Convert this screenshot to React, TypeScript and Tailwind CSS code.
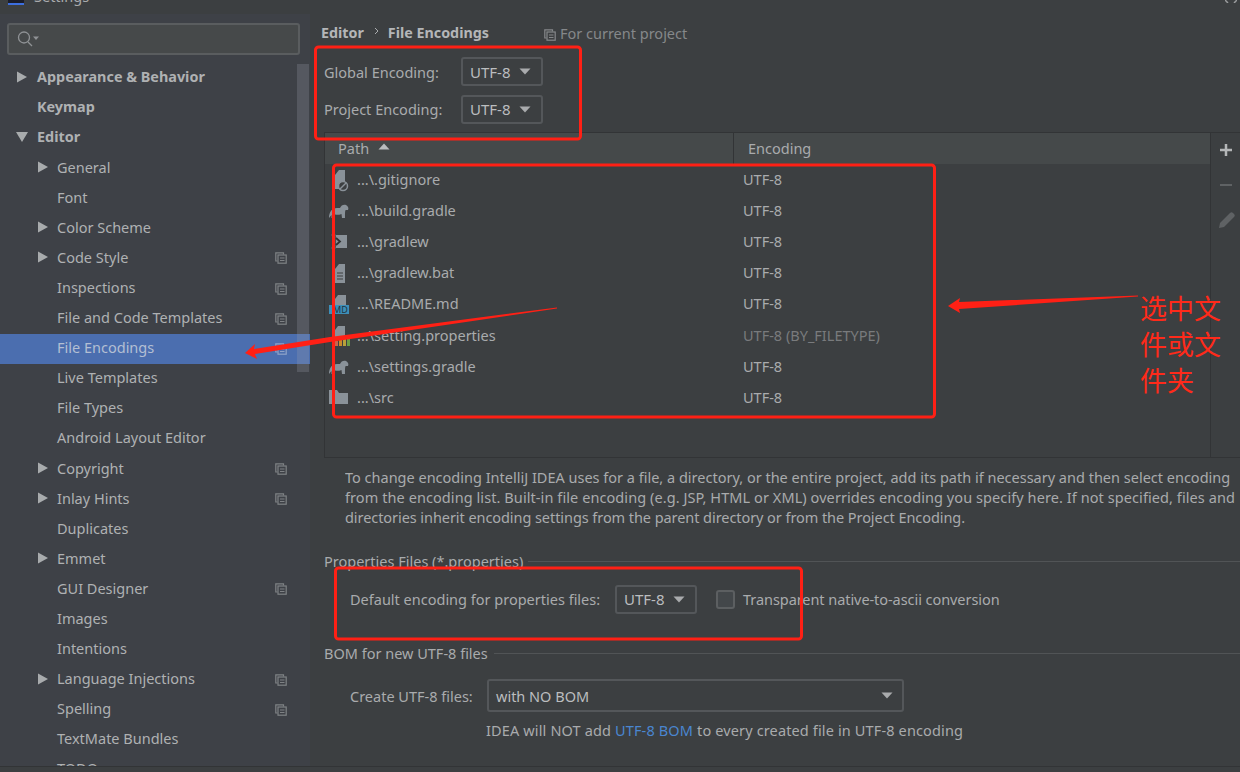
const font = "font-['Noto_Sans','Open_Sans',sans-serif]";

type TreeRow = { label: string; level: 0 | 1; bold?: boolean; arrow?: "right" | "down"; copy?: boolean; selected?: boolean };

const treeRows: TreeRow[] = [
  { label: "Appearance & Behavior", level: 0, bold: true, arrow: "right" },
  { label: "Keymap", level: 0, bold: true },
  { label: "Editor", level: 0, bold: true, arrow: "down" },
  { label: "General", level: 1, arrow: "right" },
  { label: "Font", level: 1 },
  { label: "Color Scheme", level: 1, arrow: "right" },
  { label: "Code Style", level: 1, arrow: "right", copy: true },
  { label: "Inspections", level: 1, copy: true },
  { label: "File and Code Templates", level: 1, copy: true },
  { label: "File Encodings", level: 1, copy: true, selected: true },
  { label: "Live Templates", level: 1 },
  { label: "File Types", level: 1 },
  { label: "Android Layout Editor", level: 1 },
  { label: "Copyright", level: 1, arrow: "right", copy: true },
  { label: "Inlay Hints", level: 1, arrow: "right", copy: true },
  { label: "Duplicates", level: 1 },
  { label: "Emmet", level: 1, arrow: "right" },
  { label: "GUI Designer", level: 1, copy: true },
  { label: "Images", level: 1 },
  { label: "Intentions", level: 1 },
  { label: "Language Injections", level: 1, arrow: "right", copy: true },
  { label: "Spelling", level: 1, copy: true },
  { label: "TextMate Bundles", level: 1 },
  { label: "TODO", level: 1 },
];

const fileRows = [
  { path: "...\\.gitignore", encoding: "UTF-8", icon: "ignore" },
  { path: "...\\build.gradle", encoding: "UTF-8", icon: "gradle" },
  { path: "...\\gradlew", encoding: "UTF-8", icon: "shell" },
  { path: "...\\gradlew.bat", encoding: "UTF-8", icon: "text" },
  { path: "...\\README.md", encoding: "UTF-8", icon: "md" },
  { path: "...\\setting.properties", encoding: "UTF-8 (BY_FILETYPE)", icon: "props", dim: true },
  { path: "...\\settings.gradle", encoding: "UTF-8", icon: "gradle" },
  { path: "...\\src", encoding: "UTF-8", icon: "folder" },
];

const Arrow = ({ dir }: { dir: "right" | "down" }) => (
  <svg width="12" height="12" viewBox="0 0 12 12" className="shrink-0">
    <path d={dir === "right" ? "M1 0.5 L11 6 L1 11.5 Z" : "M0 1 L12 1 L6 11 Z"} fill="#a8abad" />
  </svg>
);

const CopyIcon = ({ color = "#7f8285" }: { color?: string }) => (
  <svg width="12" height="12" viewBox="0 0 12 12" fill="none" stroke={color} strokeWidth="1.2">
    <path d="M2.5 9 H0.8 V0.8 H8.5 V2.5" />
    <rect x="3" y="3" width="8.2" height="8.2" />
    <path d="M5 6 H9.5 M5 8.5 H9.5" />
  </svg>
);

const Caret = () => (
  <svg width="12" height="7" viewBox="0 0 12 7">
    <path d="M0.5 0.5 H11.5 L6 6.5 Z" fill="#a9abad" />
  </svg>
);

const Select = ({ value, width }: { value: string; width: string }) => (
  <div className={`${width} h-[29px] flex items-center justify-between pl-[7px] pr-[10px] rounded-[3px] border-2 border-[#54575a] text-[#bbbdbf] text-[15px]`}>
    <span>{value}</span>
    <Caret />
  </div>
);

const FileIcon = ({ kind }: { kind: string }) => {
  const g = "#8a9299";
  const paper = "M7 5 L11 0 H17 V19 H7 Z";
  return (
    <svg width="24" height="22" viewBox="0 0 24 22">
      {kind === "gradle" && (
        <path d="M1 17 C1 11 4 7 9 7 L12 7 C13 4 16 3 18 4 C20 5 21 7 20 9 L18 9 C17 9 17 11 17 17 H14 L13.5 13 C11 14 9 14 7 13.500 L6.500 17 H3.500 L3.500 14 Z" fill={g} />
      )}
      {kind === "folder" && <path d="M1 2 H9 L11 5 H20 V16 H1 Z" fill={g} />}
      {kind === "shell" && (
        <g>
          <rect x="8" y="3" width="11" height="13" fill={g} />
          <path d="M3 3 H8 V16 H3" fill="none" stroke={g} strokeWidth="0.8" opacity="0.5" />
          <path d="M8 6 L12 9.500 L8 13" fill="none" stroke="#2f3234" strokeWidth="1.8" />
        </g>
      )}
      {kind === "md" && (
        <g>
          <path d="M7 4 L10 0 H18 V11 H7 Z" fill={g} />
          <rect x="1" y="10" width="20" height="9" fill="#3d8fb8" />
          <text x="5" y="18" fontSize="9" fill="#22323c" fontFamily="Noto Sans">MD</text>
        </g>
      )}
      {kind === "props" && (
        <g>
          <path d="M7 4 L10 0 H17 V12 H7 Z" fill={g} />
          <rect x="7" y="15" width="3" height="5" fill="#c9654a" />
          <rect x="11" y="14" width="3" height="6" fill="#c98a2a" />
          <rect x="15" y="12" width="3" height="8" fill="#b8a03a" />
          <rect x="19" y="9" width="3" height="11" fill="#6a9e44" />
        </g>
      )}
      {(kind === "text" || kind === "ignore") && <path d={paper} fill={g} />}
      {kind === "text" && <path d="M9 9 H15 M9 12 H15 M9 15 H15" stroke="#3c3f41" strokeWidth="1.200" />}
      {kind === "ignore" && (
        <g>
          <circle cx="15" cy="16" r="4.500" fill="#3c3f41" stroke={g} strokeWidth="1.500" />
          <path d="M12 19 L18 13" stroke={g} strokeWidth="1.500" />
        </g>
      )}
    </svg>
  );
};

const Sidebar = () => (
  <aside className="relative w-[310px] shrink-0 bg-[#3e4147] flex flex-col overflow-hidden">
    <div className="h-[49px] shrink-0 px-[7px] pt-[9px]">
      <div className="h-[32px] w-[293px] rounded-[3px] border-2 border-[#5a5d5f] bg-[#46494a] flex items-center pl-[7px]">
        <svg width="24" height="18" viewBox="0 0 24 18" fill="none" stroke="#8f9295" strokeWidth="1.300">
          <circle cx="8" cy="7.500" r="5.500" />
          <path d="M12 12 L16 16" />
          <path d="M17 6.500 H23 L20 10 Z" fill="#8f9295" stroke="none" />
        </svg>
      </div>
    </div>
    {treeRows.map((row) => (
      <div
        key={row.label}
        className={`h-[30.08px] shrink-0 flex items-center relative pb-[3px] ${row.selected ? "bg-[#4b6eaf] text-[#b3bfd3]" : "text-[#afb1b3]"} ${row.bold ? "font-bold text-[14.4px]" : ""} ${row.level === 0 ? "pl-[37px]" : "pl-[57px]"}`}
      >
        {row.arrow && (
          <span className={`absolute top-[8px] ${row.level === 0 ? "left-[16px]" : "left-[37px]"}`}>
            <Arrow dir={row.arrow} />
          </span>
        )}
        <span>{row.label}</span>
        {row.copy && (
          <span className="absolute left-[275px] top-[9px]">
            <CopyIcon color={row.selected ? "#8ea3c9" : "#7f8285"} />
          </span>
        )}
      </div>
    ))}
    <div className="absolute left-[297px] top-[50px] w-[12px] h-[308px] bg-[#9aa0aa]/25" />
  </aside>
);

const Main = () => (
  <main className="flex-1 min-w-0 flex flex-col bg-[#3c3f41] text-[#a9abad]">
    <div className="h-[29px] shrink-0 flex items-end pl-[11px]">
      <span className="font-bold text-[14.3px] text-[#b4b6b8]">Editor</span>
      <svg width="6" height="8" viewBox="0 0 6 8" fill="none" stroke="#a9abad" className="ml-[10px] mr-[8px] mb-[8px]">
        <path d="M1 1 L4 4 L1 7" />
      </svg>
      <span className="font-bold text-[14.3px] text-[#b4b6b8]">File Encodings</span>
      <span className="ml-[55px] mr-[4px] mb-[2px]"><CopyIcon color="#85888a" /></span>
      <span className="text-[#85888a]">For current project</span>
    </div>
    <div className="h-[37.5px] shrink-0 pl-[14px] flex items-center mt-[10px]">
      <span className="w-[137px]">Global Encoding:</span>
      <Select value="UTF-8" width="w-[82px]" />
    </div>
    <div className="h-[37.5px] shrink-0 pl-[14px] flex items-center">
      <span className="w-[137px]">Project Encoding:</span>
      <Select value="UTF-8" width="w-[82px]" />
    </div>
    <div className="h-[326px] shrink-0 mt-[4px] ml-[14px] border-l border-t border-b border-[#323436] flex">
      <div className="w-[885px] shrink-0 flex flex-col">
        <div className="h-[31px] shrink-0 bg-[#45494a] flex items-center pb-[2px]">
          <div className="w-[409px] pl-[13px] flex items-center gap-[9px] border-r border-[#323436] h-[31px] -mb-[2px] pb-[2px]">
            <span>Path</span>
            <svg width="12" height="7" viewBox="0 0 12 7" className="mb-[3px]"><path d="M0.5 6.500 H11.500 L6 0.5 Z" fill="#bbbdbf" /></svg>
          </div>
          <div className="pl-[14px]">Encoding</div>
        </div>
        {fileRows.map((f) => (
          <div key={f.path} className="h-[31.2px] shrink-0 flex items-center relative pb-[2px]">
            <span className="w-[408px] pl-[32px]">{f.path}</span>
            <span className={`pl-[10px] ${f.dim ? "text-[#797b7d]" : ""}`}>{f.encoding}</span>
            <span className="absolute left-[3px] top-[6px]"><FileIcon kind={f.icon} /></span>
          </div>
        ))}
      </div>
      <div className="flex-1 border-l border-[#323436] flex flex-col items-center pt-[10px] gap-[21px]">
        <svg width="14" height="14" viewBox="0 0 14 14"><path d="M7 1 V13 M1 7 H13" stroke="#b4b6b8" strokeWidth="2.500" /></svg>
        <svg width="14" height="14" viewBox="0 0 14 14"><path d="M1 7 H13" stroke="#5f6264" strokeWidth="2" /></svg>
        <svg width="18" height="18" viewBox="0 0 18 18" className="-mt-[2px] ml-[2px]"><path d="M1 17 L2 12 L12 2 C13 1 14 1 15 2 L16 3 C17 4 17 5 16 6 L6 16 Z" fill="#5f6264" /></svg>
      </div>
    </div>
    <div className="ml-[35px] mt-[9px] w-[895px] h-[60px] leading-[20px] whitespace-nowrap overflow-hidden shrink-0">
      <p>To change encoding IntelliJ IDEA uses for a file, a directory, or the entire project, add its path if necessary and then select encoding</p>
      <p className="tracking-[0.08px]">from the encoding list. Built-in file encoding (e.g. JSP, HTML or XML) overrides encoding you specify here. If not specified, files and</p>
      <p className="tracking-[-0.065px]">directories inherit encoding settings from the parent directory or from the Project Encoding.</p>
    </div>
    <div className="ml-[14px] mt-[24px] h-[20px] shrink-0 flex items-center gap-[5px]">
      <span>Properties Files (*.properties)</span>
      <div className="flex-1 h-px bg-[#515456]" />
    </div>
    <div className="ml-[40px] mt-[12px] h-[32px] shrink-0 flex items-center">
      <span className="w-[265px]">Default encoding for properties files:</span>
      <Select value="UTF-8" width="w-[82px]" />
      <span className="ml-[19px] w-[19px] h-[19px] rounded-[3px] border-2 border-[#5c5f61] bg-[#43474a]" />
      <span className="ml-[8px] tracking-[-0.06px]">Transparent native-to-ascii conversion</span>
    </div>
    <div className="ml-[14px] mt-[28px] h-[20px] shrink-0 flex items-center gap-[6px]">
      <span>BOM for new UTF-8 files</span>
      <div className="flex-1 h-px bg-[#515456]" />
    </div>
    <div className="ml-[40px] mt-[16px] h-[33px] shrink-0 flex items-center">
      <span className="w-[137px]">Create UTF-8 files:</span>
      <div className="w-[417px] h-[33px] flex items-center justify-between pl-[7px] pr-[9px] rounded-[3px] border-2 border-[#54575a] text-[#bbbdbf]">
        <span>with NO BOM</span>
        <Caret />
      </div>
    </div>
    <p className="ml-[176px] mt-[8px] whitespace-nowrap tracking-[0.14px]">
      IDEA will NOT add <span className="text-[#4a86d0]">UTF-8 BOM</span> to every created file in UTF-8 encoding
    </p>
  </main>
);

const Annotations = () => (
  <>
    <svg width="1240" height="772" viewBox="0 0 1240 772" fill="none" className="absolute left-0 top-0 pointer-events-none">
      <g stroke="#ff2015" strokeWidth="3">
        <rect x="315.500" y="47" width="265" height="92" rx="3" />
        <rect x="333.500" y="165" width="601" height="252" rx="3" />
        <rect x="335.500" y="568" width="466" height="71" rx="3" />
      </g>
      <path d="M557 307.500 L557 308.500 L330 342 L255 354 L257 359 L245 353 L255 344 L254 349 L330 337 Z" fill="#ff2015" />
      <path d="M1138 295.500 L1138 296.500 L959 309 L960 313 L948 306 L960 298 L959 302 Z" fill="#ff2015" />
    </svg>
    <div className="absolute left-[1140px] top-[290px] w-[84px] text-[27px] leading-[36px] text-[#ff2a1a] font-['Noto_Sans_CJK_SC',sans-serif] font-normal">
      选中文件或文件夹
    </div>
  </>
);

export default function App() {
  return (
    <div className={`relative w-[1240px] h-[772px] overflow-hidden bg-[#3c3f41] text-[14.5px] leading-[20px] flex flex-col ${font}`}>
      <div className="h-[14px] shrink-0 bg-[#3c3f41] overflow-hidden flex items-start pl-[8px]">
        <span className="w-[16px] h-[5px] bg-[#1b1d2a] border-b-2 border-[#3d6fe0] mr-[10px]" />
        <span className="text-[#a9abad] -mt-[14px]">Settings</span>
        <svg width="12" height="3" viewBox="0 0 12 3" className="ml-auto mr-[3px]">
          <path d="M0 0 L3 3 M12 0 L9 3" stroke="#9a9c9e" strokeWidth="1.500" />
        </svg>
      </div>
      <div className="h-[753px] shrink-0 flex border-b border-[#323436]">
        <Sidebar />
        <Main />
      </div>
      <div className="flex-1 bg-[#3c3f41]" />
      <Annotations />
    </div>
  );
}
